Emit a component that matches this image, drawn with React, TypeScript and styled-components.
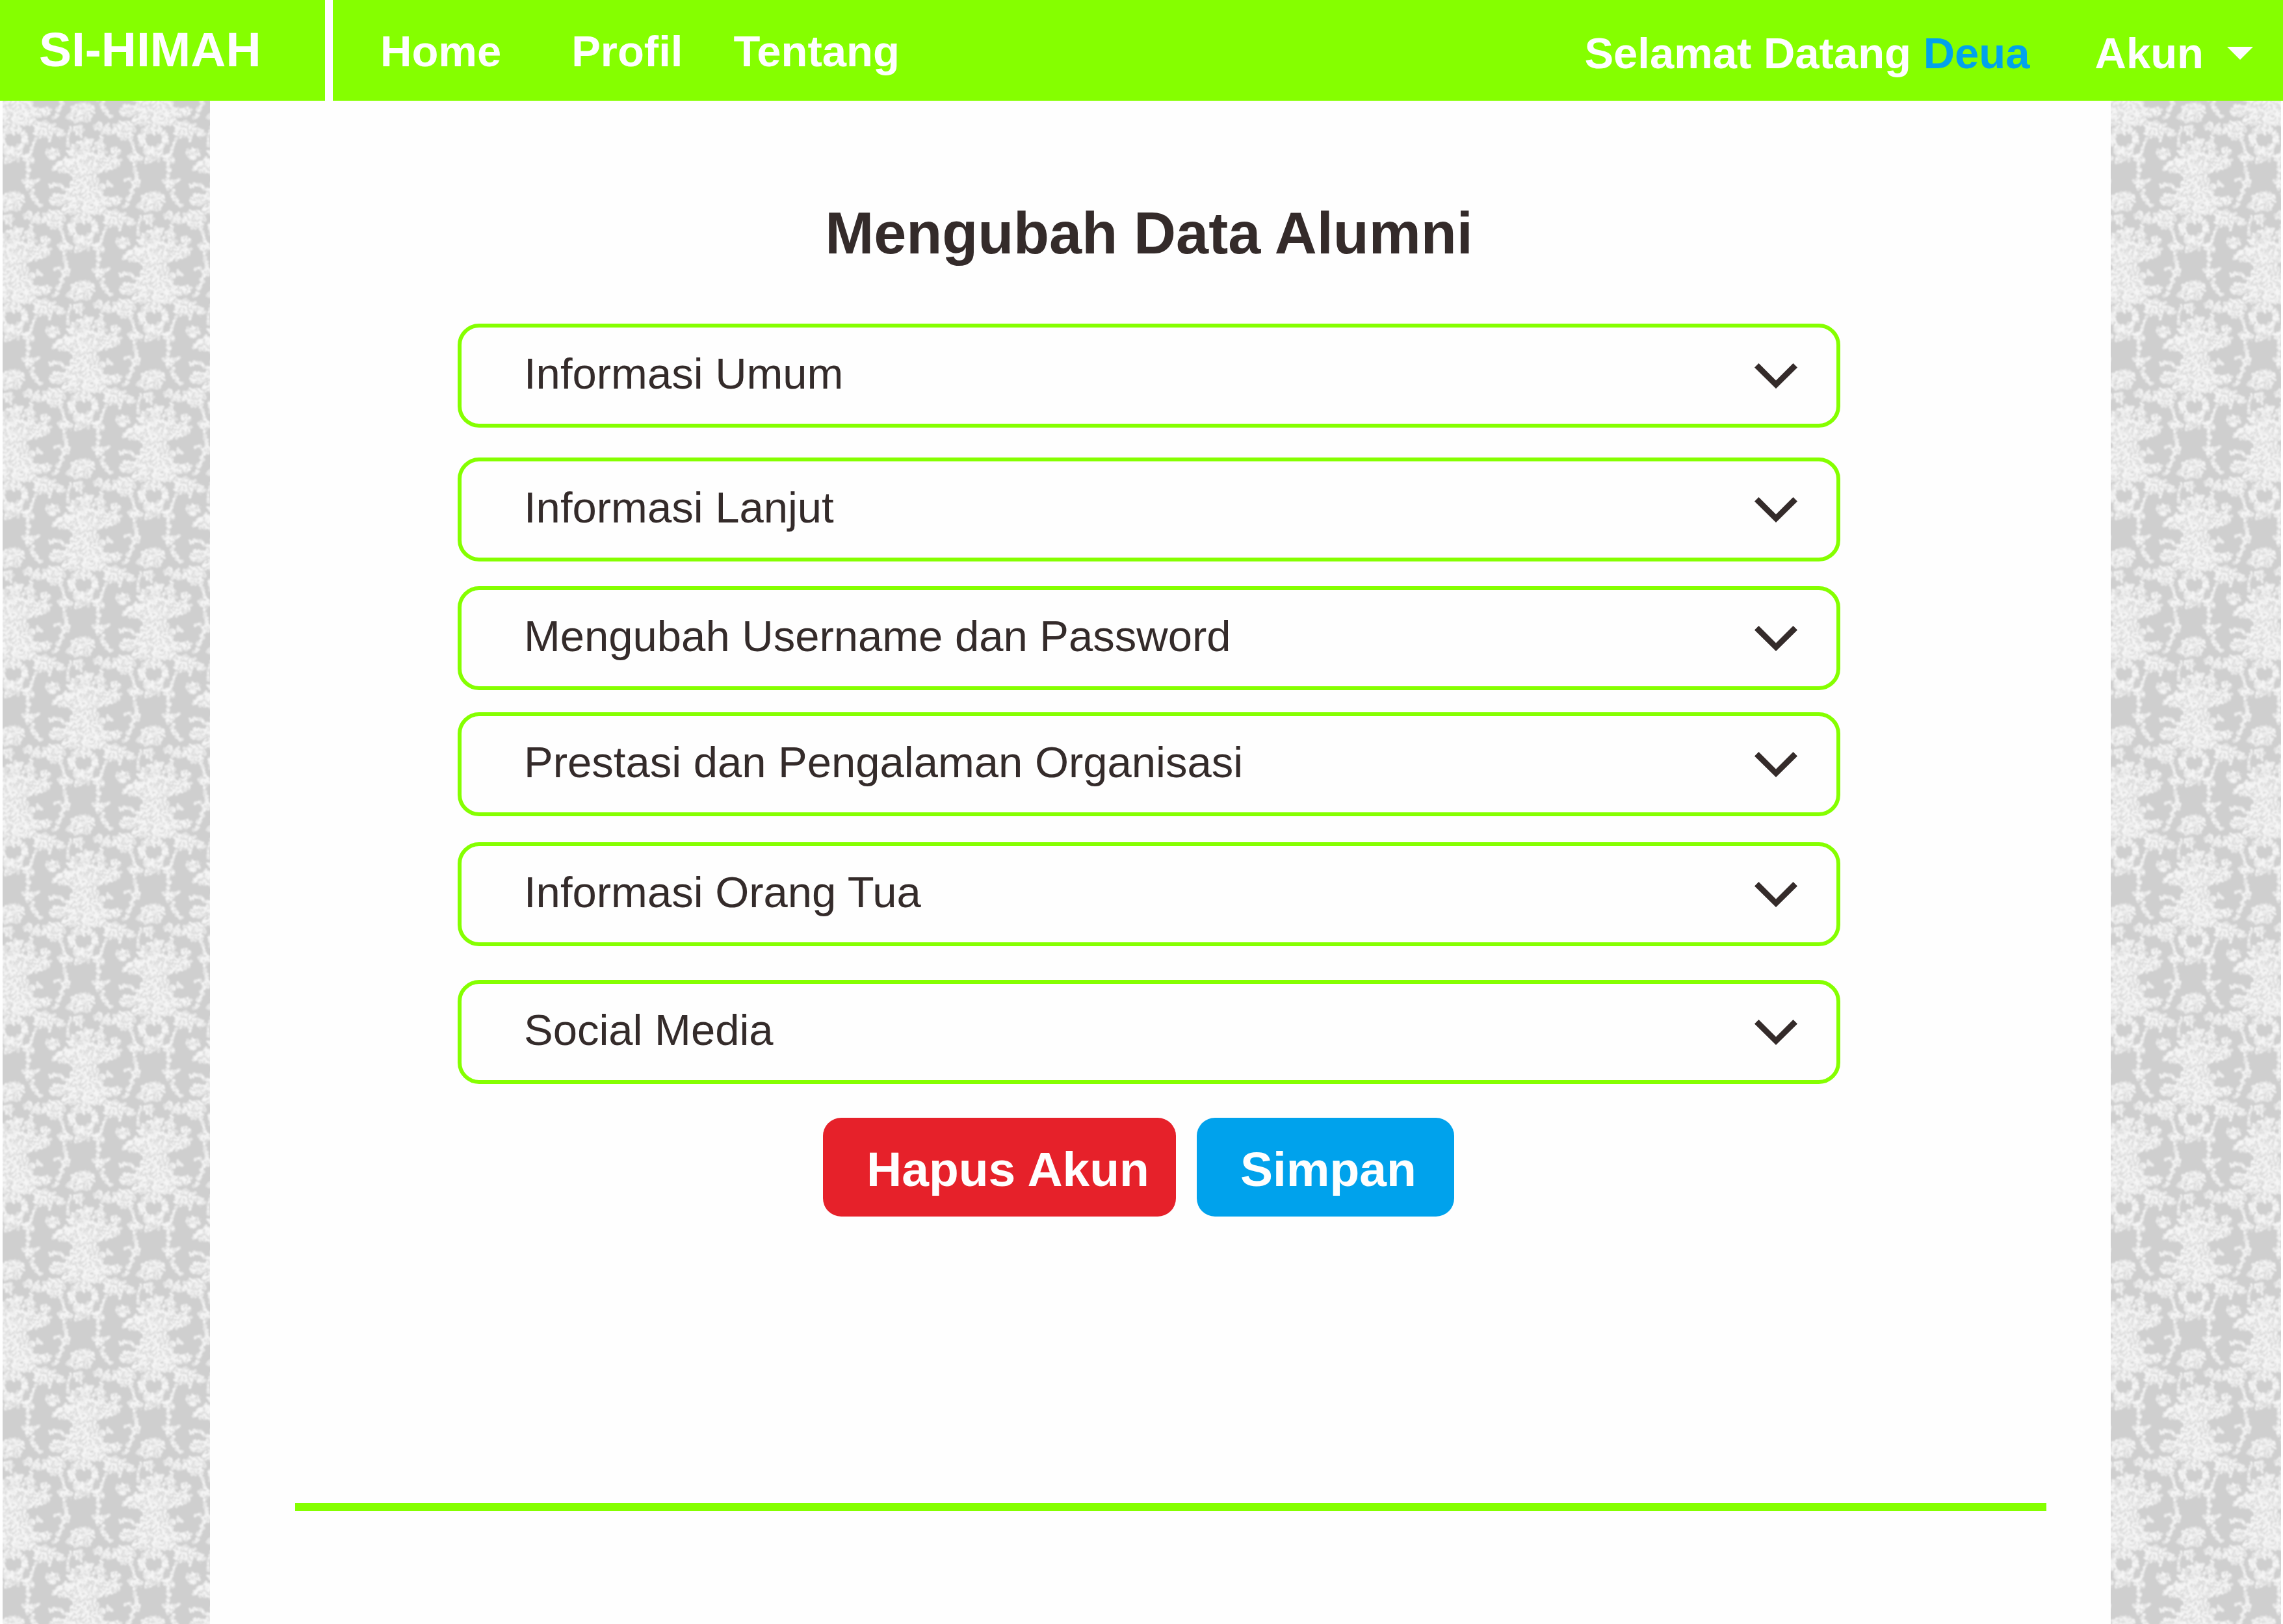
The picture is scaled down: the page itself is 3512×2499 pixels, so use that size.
import React, { useState } from "react";
import styled, { createGlobalStyle } from "styled-components";

const green = "#85ff00";
const ink = "#342b2a";
const blue = "#00a2ec";
const red = "#e6212a";
const paper = "#fefefe";

const GlobalStyle = createGlobalStyle`
  *, *::before, *::after { box-sizing: border-box; }
  body {
    margin: 0;
    background: ${paper};
    color: ${ink};
    font-family: "Liberation Sans", Arial, sans-serif;
  }
  button { font-family: inherit; }
`;

const Page = styled.div`
  min-height: 100vh;
  display: flex;
  flex-direction: column;
`;

const TopBar = styled.header`
  display: flex;
  height: 155px;
  background: ${green};
  color: ${paper};
  font-size: 67px;
  font-weight: bold;
  line-height: 76px;
  white-space: nowrap;
`;

const Brand = styled.a`
  display: flex;
  align-items: center;
  width: 512px;
  padding: 0 0 4px 60px;
  border-right: 12px solid ${paper};
  color: inherit;
  font-size: 75px;
  text-decoration: none;
`;

const Nav = styled.nav`
  flex: 1;
  display: flex;
  align-items: center;
  gap: 78px;
  padding: 2px 0 0 73px;
`;

const NavLink = styled.a<{ $spaced?: boolean }>`
  margin-right: ${(p) => (p.$spaced ? 30 : 0)}px;
  color: inherit;
  text-decoration: none;
`;

const Account = styled.div`
  display: flex;
  align-items: center;
  gap: 100px;
  padding: 8px 46px 0 0;
`;

const Welcome = styled.span``;

const UserName = styled.span`
  color: ${blue};
`;

const AccountButton = styled.button`
  display: flex;
  align-items: center;
  gap: 36px;
  padding: 0;
  border: 0;
  background: none;
  color: inherit;
  font-size: inherit;
  font-weight: inherit;
  line-height: inherit;
  cursor: pointer;
`;

const Caret = styled.svg`
  width: 40px;
  height: 20px;
  fill: currentColor;
`;

const Body = styled.div`
  flex: 1;
  display: grid;
  grid-template-columns: 323px 1fr 265px;
`;

const Rail = styled.aside<{ $side: "left" | "right" }>`
  ${(p) => (p.$side === "left" ? "padding-left: 4px;" : "padding-right: 3px;")}
`;

const RailArt = styled.svg`
  display: block;
  width: 100%;
  height: 100%;
`;

const Main = styled.main`
  display: flex;
  flex-direction: column;
`;

const Form = styled.form`
  padding: 152px 416px 0 381px;
`;

const Title = styled.h1`
  margin: 0 0 87px;
  font-size: 90px;
  line-height: 104px;
  text-align: center;
`;

const Section = styled.h2<{ $gap: number }>`
  margin: 0 0 ${(p) => p.$gap}px;
  font-size: 67px;
  font-weight: normal;
  line-height: 76px;
`;

const SectionButton = styled.button`
  display: flex;
  align-items: center;
  justify-content: space-between;
  width: 100%;
  height: 160px;
  padding: 0 60px 0 96px;
  border: 6px solid ${green};
  border-radius: 33px;
  background: ${paper};
  color: inherit;
  font-size: inherit;
  line-height: inherit;
  text-align: left;
  cursor: pointer;
`;

const SectionLabel = styled.span`
  padding-bottom: 6px;
`;

const Chevron = styled.svg<{ $open: boolean }>`
  width: 66px;
  height: 39px;
  fill: ${ink};
  transform: ${(p) => (p.$open ? "rotate(180deg)" : "none")};
`;

const Actions = styled.div`
  display: flex;
  justify-content: center;
  gap: 32px;
  padding-right: 32px;
`;

const ActionButton = styled.button<{ $color: string }>`
  min-width: 396px;
  height: 152px;
  padding: 6px 41px 0 67px;
  border: 0;
  border-radius: 28px;
  background: ${(p) => p.$color};
  color: ${paper};
  font-size: 75px;
  font-weight: bold;
  line-height: 84px;
  text-align: left;
  cursor: pointer;
`;

const FooterRule = styled.hr`
  width: auto;
  height: 12px;
  margin: auto 99px 174px 131px;
  border: 0;
  background: ${green};
`;

/* ---- Floral damask used on both side rails ---- */

const TILE_W = 216;
const TILE_H = 274;

function makeRandom(seed: number) {
  let s = seed;
  return () => {
    s = (s * 1664525 + 1013904223) % 4294967296;
    return s / 4294967296;
  };
}

const tones = [
  { color: "#e2e2e2", width: 5 },
  { color: "#e9e9e9", width: 5 },
  { color: "#efefef", width: 4 },
  { color: "#f6f6f6", width: 3 },
  { color: "#d9d9d9", width: 2 },
];

function buildMotif() {
  const rnd = makeRandom(29);
  const paths = ["", "", "", "", ""];

  const leaf = (x: number, y: number, size: number, tone?: number) => {
    const a = rnd() * Math.PI * 2;
    const r = size * (0.5 + rnd() * 0.7);
    const t = tone ?? Math.floor(rnd() * 4);
    paths[t] += `M${x.toFixed(1)} ${y.toFixed(1)}l${(Math.cos(a) * r).toFixed(1)} ${(Math.sin(a) * r).toFixed(1)}`;
  };

  // filled oval of leaves; a few veins let the ground show through
  const cluster = (cx: number, cy: number, rx: number, ry: number, n: number) => {
    const count = Math.round(n * 1.5);
    for (let i = 0; i < count; i++) {
      const a = rnd() * Math.PI * 2;
      const d = Math.sqrt(rnd()) * 1.25;
      const x = cx + Math.cos(a) * rx * d;
      const y = cy + Math.sin(a) * ry * d;
      leaf(x, y, 4);
      if (i % 5 === 0) leaf(x + 1, y + 2, 4, 4);
    }
  };

  const ring = (cx: number, cy: number, r: number, n: number) => {
    for (let i = 0; i < n; i++) {
      const a = rnd() * Math.PI * 2;
      const d = r + (rnd() - 0.5) * 8;
      leaf(cx + Math.cos(a) * d, cy + Math.sin(a) * d, 3);
    }
  };

  const vine = (pts: number[][], spread: number, step: number) => {
    for (let k = 0; k < pts.length - 1; k++) {
      const [x0, y0] = pts[k];
      const [x1, y1] = pts[k + 1];
      const n = Math.ceil(Math.hypot(x1 - x0, y1 - y0) / step);
      for (let i = 0; i < n; i++) {
        const u = i / n;
        leaf(
          x0 + (x1 - x0) * u + (rnd() - 0.5) * spread,
          y0 + (y1 - y0) * u + (rnd() - 0.5) * spread,
          2
        );
      }
    }
  };

  // crown bouquet
  ring(6, 62, 3, 8);
  cluster(3, 80, 22, 14, 90);
  cluster(0, 98, 32, 12, 130);
  cluster(-26, 102, 14, 8, 40);
  cluster(34, 95, 17, 8, 46);
  cluster(48, 80, 5, 7, 12);
  cluster(-50, 82, 7, 6, 12);
  cluster(-42, 102, 7, 4, 10);
  cluster(26, 72, 3, 10, 10);

  // vase
  cluster(0, 120, 15, 12, 90);
  cluster(0, 136, 22, 12, 130);
  cluster(0, 152, 29, 12, 150);
  cluster(0, 168, 28, 4, 54);
  cluster(-2, 181, 7, 4, 14);

  // side blossoms
  cluster(-43, 153, 8, 7, 28);
  cluster(-46, 182, 13, 10, 58);
  cluster(43, 154, 8, 6, 26);
  cluster(46, 181, 13, 9, 58);
  cluster(70, 186, 6, 4, 9);
  cluster(-69, 184, 6, 4, 9);
  vine([[-54, 131], [-38, 129], [-30, 136]], 3, 2);
  vine([[26, 134], [36, 127], [44, 131]], 4, 2);

  // wreath and pendant
  ring(-2, 195, 18, 110);
  cluster(-1, 219, 10, 7, 38);
  cluster(-9, 229, 4, 3, 7);

  // hanging vines
  vine([[-37, 196], [-33, 208], [-30, 220]], 1, 3);
  cluster(-30, 225, 7, 5, 15);
  vine([[-30, 230], [-30, 250], [-28, 262]], 4, 2);
  vine([[-45, 259], [-39, 257], [-32, 265]], 2, 3);
  cluster(-29, 264, 5, 4, 10);
  vine([[-32, 270], [-38, 284], [-48, 303]], 5, 2);
  vine([[32, 196], [28, 208], [24, 220]], 1, 3);
  cluster(23, 225, 7, 5, 15);
  vine([[22, 230], [21, 250], [20, 262]], 4, 2);
  vine([[38, 259], [32, 260], [24, 268]], 2, 3);
  cluster(20, 265, 5, 4, 10);
  vine([[26, 272], [30, 286], [42, 303]], 5, 2);

  // loose sprays between motifs
  cluster(-4, 287, 15, 6, 32);
  cluster(-14, 298, 10, 5, 16);
  cluster(4, 300, 6, 4, 13);
  cluster(-10, 320, 6, 6, 15);
  vine([[-21, 316], [-25, 330], [-26, 346]], 1, 3);
  cluster(22, 313, 4, 4, 7);
  cluster(34, 317, 3, 5, 7);
  vine([[28, 322], [24, 334], [28, 344]], 3, 4);
  cluster(60, 218, 6, 5, 12);
  vine([[56, 196], [54, 202]], 3, 3);

  return paths;
}

const motif = buildMotif();

const placements = [-1, 0, 1].flatMap((col) =>
  [-2, -1, 0, 1].flatMap((row) => [
    [col * TILE_W, row * TILE_H],
    [col * TILE_W + TILE_W / 2, row * TILE_H + TILE_H / 2],
  ])
);

function Damask({ id, originX }: { id: string; originX: number }) {
  return (
    <RailArt aria-hidden="true">
      <defs>
        <filter id={`${id}-soft`} x="-10%" y="-10%" width="120%" height="120%">
          <feGaussianBlur stdDeviation="1" />
        </filter>
        <g id={`${id}-motif`} fill="none" strokeLinecap="round" filter={`url(#${id}-soft)`}>
          {motif.map((d, i) => (
            <path key={i} d={d} stroke={tones[i].color} strokeWidth={tones[i].width} strokeOpacity="0.9" />
          ))}
        </g>
        <pattern id={id} x={originX} y="0" width={TILE_W} height={TILE_H} patternUnits="userSpaceOnUse">
          <rect width={TILE_W} height={TILE_H} fill="#cfcfcf" />
          {placements.map(([x, y], i) => (
            <use key={i} href={`#${id}-motif`} x={x} y={y} />
          ))}
        </pattern>
      </defs>
      <rect width="100%" height="100%" fill={`url(#${id})`} />
    </RailArt>
  );
}

const sections = [
  { label: "Informasi Umum", gap: 46 },
  { label: "Informasi Lanjut", gap: 38 },
  { label: "Mengubah Username dan Password", gap: 34 },
  { label: "Prestasi dan Pengalaman Organisasi", gap: 40 },
  { label: "Informasi Orang Tua", gap: 52 },
  { label: "Social Media", gap: 52 },
];

export default function App() {
  const [open, setOpen] = useState<string | null>(null);

  return (
    <>
      <GlobalStyle />
      <Page>
        <TopBar>
          <Brand href="#">SI-HIMAH</Brand>
          <Nav>
            <NavLink href="#home" $spaced>Home</NavLink>
            <NavLink href="#profil">Profil</NavLink>
            <NavLink href="#tentang">Tentang</NavLink>
          </Nav>
          <Account>
            <Welcome>
              Selamat Datang <UserName>Deua</UserName>
            </Welcome>
            <AccountButton type="button" aria-haspopup="menu">
              Akun
              <Caret viewBox="0 0 40 20" aria-hidden="true">
                <path d="M0 0H40L20 20Z" />
              </Caret>
            </AccountButton>
          </Account>
        </TopBar>
        <Body>
          <Rail $side="left">
            <Damask id="damask-left" originX={126} />
          </Rail>
          <Main>
            <Form onSubmit={(e) => e.preventDefault()}>
              <Title>Mengubah Data Alumni</Title>
              {sections.map(({ label, gap }) => (
                <Section key={label} $gap={gap}>
                  <SectionButton
                    type="button"
                    aria-expanded={open === label}
                    onClick={() => setOpen(open === label ? null : label)}
                  >
                    <SectionLabel>{label}</SectionLabel>
                    <Chevron $open={open === label} viewBox="0 0 66 39" aria-hidden="true">
                      <path d="M0 6.5L6.5 0L33 26.5L59.5 0L66 6.5L33 39Z" />
                    </Chevron>
                  </SectionButton>
                </Section>
              ))}
              <Actions>
                <ActionButton type="button" $color={red}>Hapus Akun</ActionButton>
                <ActionButton type="submit" $color={blue}>Simpan</ActionButton>
              </Actions>
            </Form>
            <FooterRule />
          </Main>
          <Rail $side="right">
            <Damask id="damask-right" originX={130} />
          </Rail>
        </Body>
      </Page>
    </>
  );
}
